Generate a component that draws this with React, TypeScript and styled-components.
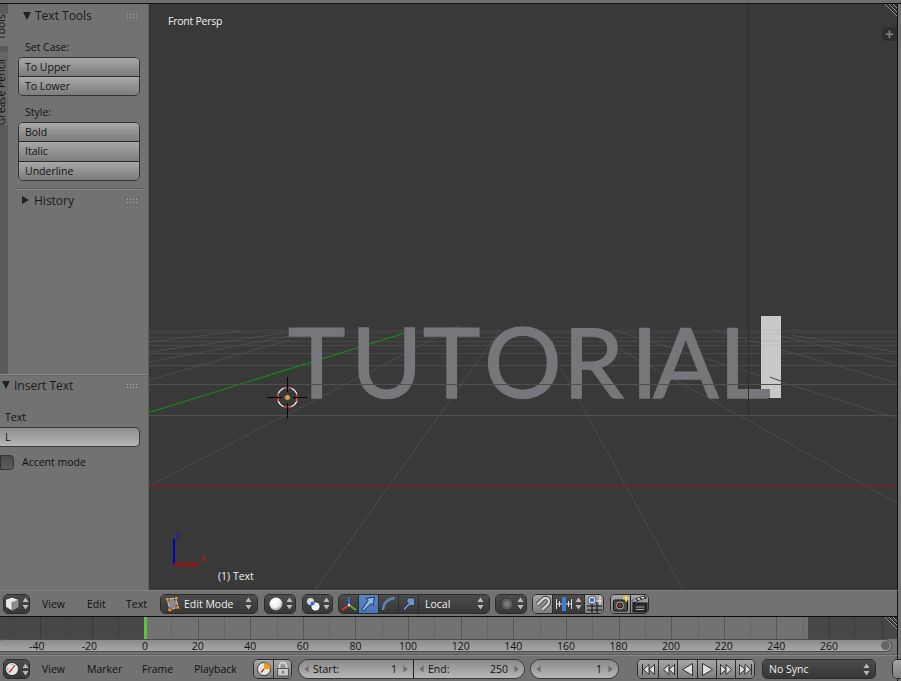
import React from "react";
import styled, { createGlobalStyle } from "styled-components";

const Global = createGlobalStyle`
  html, body { margin: 0; padding: 0; background: #727272; }
  * { box-sizing: border-box; }
`;

const Root = styled.div`
  width: 901px; height: 681px; overflow: hidden; position: relative;
  display: flex; flex-direction: column; background: #727272;
  font-family: "Open Sans", "Noto Sans", sans-serif; font-size: 10.5px; color: #111;
`;
const TopStrip = styled.div`
  height: 4px; flex: none; background: #6e6e6e; border-bottom: 1px solid #111;
`;
const Main = styled.div`display: flex; height: 586px; flex: none;`;
const Sidebar = styled.div`
  width: 149px; flex: none; display: flex; flex-direction: column;
  border-right: 1px solid #5e5e5e; background: #727272;
`;
const ToolShelf = styled.div`display: flex; height: 370px; flex: none;`;
const Tabs = styled.div`
  width: 8px; flex: none; background: #5a5a5a; overflow: hidden;
  display: flex; flex-direction: column; padding-top: 10px;
`;
const Tab = styled.div<{ $h: number; $pb: number; $active?: boolean }>`
  height: ${(p) => p.$h}px; width: 8px; flex: none; margin-bottom: 6px; padding-bottom: ${(p) => p.$pb}px;
  background: ${(p) => (p.$active ? "#727272" : "#666666")};
  overflow: hidden; display: flex; align-items: flex-end; justify-content: center;
`;
const TabText = styled.span`
  writing-mode: vertical-rl; transform: rotate(180deg); white-space: nowrap;
  line-height: 12px; margin-left: -7px; color: #111; font-size: 10.5px;
`;
const Shelf = styled.div`flex: 1; display: flex; flex-direction: column; min-width: 0;`;
const PanelHeader = styled.div<{ $left: number; $h?: number }>`
  height: ${(p) => p.$h ?? 24}px; flex: none; display: flex; align-items: center;
  padding-left: ${(p) => p.$left}px; font-size: 12px; color: #1a1a1a; position: relative;
`;
const Tri = styled.span<{ $open?: boolean }>`
  width: 0; height: 0; flex: none; margin-right: 5px;
  ${(p) =>
    p.$open
      ? "border-left:4px solid transparent;border-right:4px solid transparent;border-top:8px solid #222;margin-right:4px;"
      : "border-top:4px solid transparent;border-bottom:4px solid transparent;border-left:7px solid #222;"}
`;
const Grip = styled.span`
  width: 11px; height: 5px; margin-left: auto; margin-right: 11px; flex: none;
  background-image: radial-gradient(circle, #b8b8b8 0.6px, #5a5a5a 0.7px, transparent 1px);
  background-size: 3px 3px; opacity: 0.9;
`;
const Label = styled.div<{ $top: number; $left: number }>`
  height: 14px; line-height: 14px; flex: none;
  margin-top: ${(p) => p.$top}px; margin-left: ${(p) => p.$left}px; color: #111;
`;
const BtnGroup = styled.div`
  width: 122px; margin: 3px 0 0 10px; flex: none;
  border: 1px solid #333; border-radius: 5px; overflow: hidden;
`;
const Btn = styled.div<{ $h: number }>`
  height: ${(p) => p.$h}px; line-height: 18px; padding-left: 6px; color: #111;
  background: linear-gradient(#a8a8a8, #7c7c7c);
  & + & { border-top: 1px solid #2e2e2e; }
`;
const Separator = styled.div`
  height: 2px; width: 129px; margin: 7px 0 0 6px; flex: none;
  background: #5c5c5c; border-bottom: 1px solid #858585;
`;
const Operator = styled.div`
  height: 216px; flex: none; display: flex; flex-direction: column;
  border-top: 1px solid #8a8a8a; box-shadow: inset 0 1px 0 #666;
`;
const TextInput = styled.div`
  width: 141px; height: 20px; margin: 3px 0 0 -1px; flex: none; padding-left: 5px; line-height: 18px;
  border: 1px solid #3a3a3a; border-radius: 0 5px 5px 0; color: #111;
  background: linear-gradient(#8e8e8e, #b6b6b6);
`;
const CheckRow = styled.div`display: flex; align-items: center; height: 16px; margin-top: 7px; flex: none;`;
const Check = styled.span`
  width: 14px; height: 15px; flex: none; border: 1px solid #333; border-radius: 0 4px 4px 0;
  background: linear-gradient(#4a4a4a, #5c5c5c); margin-right: 8px;
`;

const Viewport = styled.div`flex: 1; position: relative; background: #393939; overflow: hidden;`;
const Canvas = styled.svg`position: absolute; inset: 0; display: block;`;
const Overlay = styled.div<{ $x: number; $y: number; $ls?: number }>`
  position: absolute; left: ${(p) => p.$x}px; top: ${(p) => p.$y}px; color: #f0f0f0; white-space: nowrap; line-height: 14px;
  letter-spacing: ${(p) => p.$ls ?? 0}px;
`;
const AddBtn = styled.div`
  position: absolute; right: 0; top: 23px; width: 15px; height: 14px; background: #2e2e2e;
  border-radius: 4px 0 0 4px; color: #808080; font: bold 15px/14px "Liberation Sans", sans-serif; text-align: center;
`;
const HatchBox = styled.svg<{ $top: number }>`
  position: absolute; right: 0; top: ${(p) => p.$top}px; display: block; z-index: 2;
`;
const RightStrip = styled.div`width: 4px; flex: none; border-left: 1px solid #111; background: #727272;`;

const Bar = styled.div<{ $h: number }>`
  height: ${(p) => p.$h}px; flex: none; display: flex; align-items: center; padding-left: 3px;
  background: #727272; position: relative; margin-right: 3px; border-right: 1px solid #111;
`;
const HeaderBar = styled(Bar)`border-top: 1px solid #808080; border-bottom: 1px solid #0c0c0c;`;
const FootBar = styled(Bar)`border-top: 1px solid #858585; padding-top: 1px;`;
const Group = styled.div<{ $ml?: number }>`
  display: flex; height: 20px; flex: none; margin-left: ${(p) => p.$ml ?? 0}px;
  border: 1px solid #2c2c2c; border-radius: 5px; overflow: hidden;
`;
const Cell = styled.div<{ $w: number; $tone?: "dark" | "light" | "blue" }>`
  width: ${(p) => p.$w}px; flex: none; display: flex; align-items: center; justify-content: center; gap: 2px;
  color: #eee; position: relative;
  background: ${(p) =>
    p.$tone === "light"
      ? "linear-gradient(#a6a6a6, #7e7e7e)"
      : p.$tone === "blue"
        ? "linear-gradient(#5986c8, #4a75b2)"
        : "linear-gradient(#4c4c4c, #373737)"};
  & + & { border-left: 1px solid #2c2c2c; }
`;
const SelectCell = styled(Cell)<{ $pad?: number }>`
  justify-content: flex-start; padding: 0 5px 0 ${(p) => p.$pad ?? 6}px; gap: 4px;
`;
const SelectText = styled.span`flex: 1; white-space: nowrap;`;
const Menu = styled.div<{ $w: number; $ml?: number }>`
  width: ${(p) => p.$w}px; margin-left: ${(p) => p.$ml ?? 0}px; flex: none; color: #111; line-height: 14px;
`;

const TimelineArea = styled.div`
  height: 38px; flex: none; display: flex; flex-direction: column; position: relative;
  border-right: 1px solid #111; margin-right: 3px;
`;
const Track = styled.div`height: 22px; flex: none; display: flex; position: relative; background: #727272;`;
const TrackGrid = styled.svg`position: absolute; inset: 0; display: block;`;
const Range = styled.div<{ $w: number }>`background: #474747; flex: 0 0 ${(p) => p.$w}px;`;
const Playhead = styled.div`width: 3px; flex: none; background: #5dc43c; position: relative; z-index: 1;`;
const FillRange = styled.div`flex: 1;`;
const ScrollRow = styled.div`height: 16px; flex: none; border-bottom: 1px solid #606060;`;
const Ruler = styled.div`
  height: 13px; width: 896px; margin-left: -4px; padding-left: 16.5px; display: flex; align-items: center; position: relative;
  border: 1px solid #4c4c4c; border-radius: 7px; background: linear-gradient(#8a8a8a, #a8a8a8);
`;
const Tick = styled.span<{ $neg?: boolean }>`
  width: 52.62px; flex: none; text-align: center; color: #111; line-height: 12px;
  padding-right: ${(p) => (p.$neg ? 6 : 0)}px;
`;
const ScrollDot = styled.span`
  position: absolute; right: 1px; top: 1px; width: 9px; height: 9px; border-radius: 50%; background: #666;
`;
const NumGroup = styled.div<{ $ml: number }>`
  display: flex; height: 20px; flex: none; margin-left: ${(p) => p.$ml}px;
  border: 1px solid #3a3a3a; border-radius: 10px; overflow: hidden;
`;
const NumField = styled.div<{ $w: number }>`
  width: ${(p) => p.$w}px; flex: none; display: flex; align-items: center; padding: 0 5px;
  background: linear-gradient(#8a8a8a, #b6b6b6); color: #111; gap: 6px;
  & + & { border-left: 1px solid #222; }
`;
const NumLabel = styled.span`flex: 1; white-space: nowrap; margin-left: -2px;`;

const UpDown = ({ c = "#bbb" }: { c?: string }) => (
  <svg width="7" height="13" viewBox="0 0 7 13" style={{ flex: "none" }}>
    <path d="M3.5 0.5 L6.5 5 H0.5Z M0.5 8 H6.5 L3.5 12.5Z" fill={c} />
  </svg>
);
const Ico = ({ s = 16, children }: { s?: number; children: React.ReactNode }) => (
  <svg width={s} height={s} viewBox={`0 0 ${s} ${s}`} style={{ flex: "none" }}>{children}</svg>
);
const Cube = () => (
  <Ico>
    <path d="M8 1 L14.5 3.5 V11 L8 15 L1.5 11 V3.5Z" fill="#e8e8e8" stroke="#222" strokeWidth=".8" />
    <path d="M8 6 L14.5 3.5 V11 L8 15Z" fill="#8e8e8e" />
    <path d="M8 6 V15" stroke="#555" strokeWidth=".6" />
  </Ico>
);
const Clock = () => (
  <Ico>
    <circle cx="8" cy="8" r="6.5" fill="#e6e6e6" stroke="#222" strokeWidth=".8" />
    <path d="M8 8 L11 4 M8 8 L5 11.5" stroke="#c22" strokeWidth="1.2" />
    <path d="M3 8 H4.5 M8 3 V4" stroke="#777" />
  </Ico>
);
const EditMode = () => (
  <Ico>
    <path d="M3 3 L12 2 L14 11 L6 14Z" fill="#8a8a8a" stroke="#ddd" strokeWidth=".8" />
    <g fill="#e8902a" stroke="#222" strokeWidth=".5">
      <rect x="1.5" y="1.5" width="3.5" height="3.5" />
      <rect x="10.5" y="0.5" width="3.5" height="3.5" />
      <rect x="12" y="9.5" width="3.5" height="3.5" />
      <rect x="4" y="12" width="3.5" height="3.5" />
    </g>
  </Ico>
);
const Sphere = () => (
  <Ico>
    <defs>
      <radialGradient id="sph" cx=".4" cy=".35" r=".7">
        <stop offset="0" stopColor="#fff" />
        <stop offset=".6" stopColor="#eee" />
        <stop offset="1" stopColor="#888" />
      </radialGradient>
    </defs>
    <circle cx="8" cy="8" r="6.5" fill="url(#sph)" />
  </Ico>
);
const Pivot = () => (
  <Ico>
    <circle cx="5.5" cy="5.5" r="4" fill="#ddd" stroke="#222" strokeWidth=".7" />
    <circle cx="10.5" cy="10.5" r="4.5" fill="#f2f2f2" stroke="#222" strokeWidth=".7" />
    <circle cx="7.5" cy="7.5" r="2" fill="#2f6fd6" />
  </Ico>
);
const Axes = () => (
  <Ico s={18}>
    <path d="M9 10 V2" stroke="#3a6fd8" strokeWidth="1.8" />
    <path d="M9 10 L16 15" stroke="#5fb030" strokeWidth="1.8" />
    <path d="M9 10 L2 15" stroke="#d63a2a" strokeWidth="1.8" />
    <circle cx="9" cy="10" r="1.2" fill="#ddd" />
  </Ico>
);
const ArrowBlue = () => (
  <Ico s={18}>
    <path d="M2 14.5 L3.5 16 L11 8.5 L13 10.5 L14.5 2 L6 3.5 L8 5.5Z" fill="#8cb6ec" stroke="#17233a" strokeWidth=".9" />
  </Ico>
);
const ArcBlue = () => (
  <Ico s={18}>
    <path d="M3 15 C3.5 8 7.5 4 14.5 3" fill="none" stroke="#5f85b8" strokeWidth="2.4" />
  </Ico>
);
const ScaleBlue = () => (
  <Ico s={18}>
    <path d="M3 14 L4.5 15.5 L9.5 10.5 H14.5 V3 H7 V8 H8.5Z" fill="#6f94c6" stroke="#1c2433" strokeWidth=".7" />
  </Ico>
);
const Prop = () => (
  <Ico>
    <circle cx="8" cy="8" r="6" fill="#5c5c5c" stroke="#333" strokeWidth=".7" />
    <circle cx="8" cy="8" r="3" fill="#7a7a7a" />
  </Ico>
);
const Magnet = () => (
  <Ico s={18}>
    <path d="M3.5 9.5 L9 4 a3.4 3.4 0 0 1 5 5 L8.5 14.5" fill="none" stroke="#2c2c2c" strokeWidth="4.2" />
    <path d="M3.5 9.5 L9 4 a3.4 3.4 0 0 1 5 5 L8.5 14.5" fill="none" stroke="#cfcfcf" strokeWidth="2.6" />
  </Ico>
);
const SnapType = () => (
  <Ico s={18}>
    <path d="M1.5 4 V14 M16.5 4 V14 M4.5 6 V12 M13.5 6 V12 M1.5 9 H16.5" stroke="#dcdcdc" strokeWidth="1" />
    <rect x="7" y="2" width="4" height="14" fill="#3d7fd8" />
  </Ico>
);
const SnapGrid = () => (
  <Ico s={18}>
    <path d="M2 11 H17 M2 15 H17 M7 7 V18 M12 7 V18" stroke="#111" strokeWidth="1.1" />
    <path d="M10 6 H17 M15 1 V10" stroke="#f0f0f0" strokeWidth="1" />
    <circle cx="7" cy="5" r="4" fill="#f0f0f0" stroke="#222" strokeWidth=".7" />
    <circle cx="7" cy="5" r="2.3" fill="#2f6fd6" />
  </Ico>
);
const Camera = () => (
  <Ico s={18}>
    <rect x="1.5" y="5" width="14" height="11" rx="1.5" fill="#4a4a4a" stroke="#111" />
    <circle cx="8" cy="10.5" r="3.5" fill="#222" stroke="#ccc" strokeWidth=".8" />
    <circle cx="8" cy="10.5" r="1.4" fill="#b33" />
    <path d="M14 0.5 V6.5 M11 3.5 H17" stroke="#f2d44a" strokeWidth="2" />
  </Ico>
);
const Clapper = () => (
  <Ico s={18}>
    <rect x="2" y="8" width="14" height="9" fill="#2d2d2d" stroke="#111" />
    <path d="M5 12 H13 M5 14.5 H13" stroke="#9aa8c0" strokeWidth="1" />
    <path d="M1.5 7.5 L15.5 2.5 L14.5 0.5 L1 5Z" fill="#e8e8e8" stroke="#111" strokeWidth=".7" />
    <path d="M5 3.6 L7 6.2 M9 2.4 L11 5 M13 1.2 L15 3.8" stroke="#222" strokeWidth="1.2" />
    <rect x="2" y="3" width="2" height="3" fill="#6a93d0" />
  </Ico>
);
const KeyClock = () => (
  <Ico>
    <circle cx="8" cy="8" r="6.5" fill="#e6e6e6" stroke="#222" strokeWidth=".8" />
    <path d="M8 8 V1.5 A6.5 6.5 0 0 1 14.5 8Z" fill="#f09a1c" />
    <path d="M8 8 L5 11.5" stroke="#c22" strokeWidth="1.2" />
  </Ico>
);
const Lock = () => (
  <Ico>
    <path d="M4.5 7.5 V5 a3.5 3.5 0 0 1 7 0 V7.5" fill="none" stroke="#dcdcdc" strokeWidth="1.6" />
    <rect x="2.5" y="7.5" width="11" height="7.5" fill="#c8c8c8" stroke="#333" strokeWidth=".7" />
    <path d="M8 10 V12.5" stroke="#555" strokeWidth="1.4" />
  </Ico>
);
const Tp = ({ d }: { d: string }) => (
  <svg width="15" height="15" viewBox="0 0 15 15" style={{ flex: "none" }}>
    <path d={d} fill="#dedede" stroke="#222" strokeWidth=".9" strokeLinejoin="round" />
  </svg>
);

const Hatch = ({ top }: { top: number }) => (
  <HatchBox $top={top} width="13" height="13" viewBox="0 0 13 13">
    <path d="M1 0 L13 12 M5 0 L13 8 M9 0 L13 4" stroke="#9a9a9a" strokeWidth="1" />
    <path d="M2 0 L13 11 M6 0 L13 7 M10 0 L13 3" stroke="#1c1c1c" strokeWidth="1" />
  </HatchBox>
);

const Arrow = ({ dir }: { dir: "l" | "r" }) => (
  <svg width="5" height="8" viewBox="0 0 5 8" style={{ flex: "none" }}>
    <path d={dir === "l" ? "M4.5 0.5 V7.5 L0.5 4Z" : "M0.5 0.5 V7.5 L4.5 4Z"} fill="#6c6c6c" />
  </svg>
);

const floorH: [number, string][] = [
  [330, "#454545"], [332, "#454545"], [337, "#454545"], [341, "#484848"], [345, "#484848"],
  [353, "#4a4a4a"], [365, "#4c4c4c"], [384, "#505050"], [415, "#505050"],
];
const shallow: [number, number, number, number][] = [
  [149, 380, 290, 340],
  [149, 362, 300, 334],
  [149, 352, 285, 333],
  [149, 342, 240, 331],
  [613, 330, 897, 418],
  [713, 330, 897, 383],
  [763, 332, 897, 363],
  [790, 335, 897, 352],
];
const diag: [number, number, number, number][] = [
  [149, 486, 460, 325],
  [315, 590, 500, 330],
  [683, 590, 561, 368],
  [590, 333, 897, 503],
];
const ticks = [-40, -20, 0, 20, 40, 60, 80, 100, 120, 140, 160, 180, 200, 220, 240, 260];
const gridLines = Array.from({ length: 35 }, (_, i) => i - 5);

export default function App() {
  return (
    <Root>
      <Global />
      <TopStrip />
      <Main>
        <Sidebar>
          <ToolShelf>
            <Tabs>
              <Tab $h={32} $pb={6} $active><TabText>Tools</TabText></Tab>
              <Tab $h={73} $pb={0}><TabText>Grease Pencil</TabText></Tab>
            </Tabs>
            <Shelf>
              <PanelHeader $left={15} $h={23}><Tri $open />Text Tools<Grip /></PanelHeader>
              <Label $top={13} $left={17}>Set Case:</Label>
              <BtnGroup>
                <Btn $h={18}>To Upper</Btn>
                <Btn $h={19}>To Lower</Btn>
              </BtnGroup>
              <Label $top={9} $left={17}>Style:</Label>
              <BtnGroup>
                <Btn $h={18}>Bold</Btn>
                <Btn $h={20}>Italic</Btn>
                <Btn $h={19}>Underline</Btn>
              </BtnGroup>
              <Separator />
              <PanelHeader $left={14} $h={20}><Tri />History<Grip /></PanelHeader>
            </Shelf>
          </ToolShelf>
          <Operator>
            <PanelHeader $left={2} $h={20}><Tri $open />Insert Text<Grip /></PanelHeader>
            <Label $top={15} $left={5}>Text</Label>
            <TextInput>L</TextInput>
            <CheckRow><Check />Accent mode</CheckRow>
          </Operator>
        </Sidebar>
        <Viewport>
          <Canvas width="748" height="586" viewBox="149 4 748 586">
            {floorH.map(([y, c]) => (
              <line key={y} x1="149" x2="897" y1={y + 0.5} y2={y + 0.5} stroke={c} strokeWidth="1" />
            ))}
            {shallow.map(([a, b, c, d], i) => (
              <line key={i} x1={a} y1={b} x2={c} y2={d} stroke="#505050" strokeWidth=".8" />
            ))}
            {diag.map(([a, b, c, d], i) => (
              <line key={i} x1={a} y1={b} x2={c} y2={d} stroke="#525252" strokeWidth=".8" />
            ))}
            <line x1="149" y1="412.5" x2="405" y2="333" stroke="#149014" strokeWidth="1.1" />
            <line x1="149" y1="484.5" x2="897" y2="484.5" stroke="#901818" strokeWidth="1" />
            <text
              x="288 351 423 484 563 631 653 719"
              y="398"
              fontFamily="Lato, sans-serif"
              fontSize="97"
              fill="#77777b"
              stroke="#77777b"
              strokeWidth="1.4"
            >
              TUTORIAL
            </text>
            <rect x="761" y="316" width="20" height="82" fill="#c9c9c9" />
            <path d="M761 330 H781 M761 334 H781 M761 341 H781 M761 345 H781" stroke="#bcbcbc" strokeWidth="1" />
            <rect x="728" y="389" width="42" height="9" fill="#77777b" />
            <line x1="149" x2="897" y1="384.5" y2="384.5" stroke="#505050" strokeWidth="1" />
            <path d="M770 377 L775 379 L781 381" stroke="#444" fill="none" strokeWidth="1" />
            <line x1="748.5" y1="4" x2="748.5" y2="416" stroke="#2e2e2e" strokeWidth="1" />
            <g>
              <circle cx="287.5" cy="397.5" r="10" fill="none" stroke="#fff" strokeWidth="1.2" />
              <circle cx="287.5" cy="397.5" r="10" fill="none" stroke="#d01010" strokeWidth="1.2" strokeDasharray="8 7.7" strokeDashoffset="4" />
              <path d="M267 397.5 H282 M293 397.5 H307 M287.5 377 V392 M287.5 403 V418" stroke="#000" strokeWidth="1" />
              <circle cx="287.5" cy="397.5" r="3" fill="#d39a4e" stroke="#222" strokeWidth=".6" />
            </g>
            <path d="M174 539 V564" stroke="#0000c8" strokeWidth="2" />
            <path d="M174 564 H199" stroke="#c80000" strokeWidth="2" />
            <text x="175" y="538" fontFamily="Open Sans, sans-serif" fontSize="10" fill="#1414c8">z</text>
            <text x="201" y="562" fontFamily="Open Sans, sans-serif" fontSize="10" fill="#c81414">x</text>
          </Canvas>
          <Overlay $x={19} $y={10} $ls={-0.25}>Front Persp</Overlay>
          <Overlay $x={69} $y={565}>(1) Text</Overlay>
          <AddBtn>+</AddBtn>
          <Hatch top={0} />
        </Viewport>
        <RightStrip />
      </Main>
      <HeaderBar $h={27}>
        <Group>
          <Cell $w={25}><Cube /><UpDown /></Cell>
        </Group>
        <Menu $w={45} $ml={12}>View</Menu>
        <Menu $w={39}>Edit</Menu>
        <Menu $w={34}>Text</Menu>
        <Group>
          <SelectCell $w={96} $pad={3}><EditMode /><SelectText>Edit Mode</SelectText><UpDown /></SelectCell>
        </Group>
        <Group $ml={6}>
          <Cell $w={30}><Sphere /><UpDown /></Cell>
        </Group>
        <Group $ml={6}>
          <Cell $w={29}><Pivot /><UpDown /></Cell>
        </Group>
        <Group $ml={5}>
          <Cell $w={19}><Axes /></Cell>
          <Cell $w={20} $tone="blue"><ArrowBlue /></Cell>
          <Cell $w={20}><ArcBlue /></Cell>
          <Cell $w={20}><ScaleBlue /></Cell>
          <SelectCell $w={71}><SelectText>Local</SelectText><UpDown /></SelectCell>
        </Group>
        <Group $ml={5}>
          <Cell $w={30}><Prop /><UpDown /></Cell>
        </Group>
        <Group $ml={5}>
          <Cell $w={19} $tone="light"><Magnet /></Cell>
          <Cell $w={32}><SnapType /><UpDown /></Cell>
          <Cell $w={19} $tone="light"><SnapGrid /></Cell>
        </Group>
        <Group $ml={6}>
          <Cell $w={19} $tone="light"><Camera /></Cell>
          <Cell $w={18} $tone="light"><Clapper /></Cell>
        </Group>
      </HeaderBar>
      <TimelineArea>
        <Track>
          <Range $w={144} />
          <Playhead />
          <FillRange />
          <Range $w={89} />
          <TrackGrid width="897" height="22" viewBox="0 0 897 22">
            {gridLines.map((k) => {
              const x = Math.round(145 + k * 26.31) + 0.5;
              return x === 145.5 ? null : (
                <line key={k} x1={x} x2={x} y1="0" y2="22" stroke="#222" strokeOpacity={k % 2 === 0 ? 0.35 : 0.14} strokeWidth="1" />
              );
            })}
          </TrackGrid>
        </Track>
        <ScrollRow>
          <Ruler>
            {ticks.map((t) => <Tick key={t} $neg={t < 0}>{t}</Tick>)}
            <ScrollDot />
          </Ruler>
        </ScrollRow>
        <Hatch top={0} />
      </TimelineArea>
      <FootBar $h={26}>
        <Group>
          <Cell $w={25}><Clock /><UpDown /></Cell>
        </Group>
        <Menu $w={45} $ml={12}>View</Menu>
        <Menu $w={55}>Marker</Menu>
        <Menu $w={52}>Frame</Menu>
        <Menu $w={59}>Playback</Menu>
        <Group>
          <Cell $w={19} $tone="light"><KeyClock /></Cell>
          <Cell $w={18} $tone="light"><Lock /></Cell>
        </Group>
        <NumGroup $ml={6}>
          <NumField $w={114}><Arrow dir="l" /><NumLabel>Start:</NumLabel>1<Arrow dir="r" /></NumField>
          <NumField $w={111}><Arrow dir="l" /><NumLabel>End:</NumLabel>250<Arrow dir="r" /></NumField>
        </NumGroup>
        <NumGroup $ml={5}>
          <NumField $w={87}><Arrow dir="l" /><NumLabel />1<Arrow dir="r" /></NumField>
        </NumGroup>
        <Group $ml={18}>
          <Cell $w={20} $tone="light"><Tp d="M1.5 2 V13 M13.5 2.5 L8 7.5 L13.5 12.5Z M8 2.5 L2.5 7.5 L8 12.5Z" /></Cell>
          <Cell $w={19} $tone="light"><Tp d="M13.5 2.5 L8 7.5 L13.5 12.5Z M8 2.5 L2.5 7.5 L8 12.5Z" /></Cell>
          <Cell $w={20} $tone="light"><Tp d="M12.5 1.5 L2.5 7.5 L12.5 13.5Z" /></Cell>
          <Cell $w={19} $tone="light"><Tp d="M2.5 1.5 L12.5 7.5 L2.5 13.5Z" /></Cell>
          <Cell $w={19} $tone="light"><Tp d="M1.5 2.5 L7 7.5 L1.5 12.5Z M7 2.5 L12.5 7.5 L7 12.5Z" /></Cell>
          <Cell $w={19} $tone="light"><Tp d="M13.5 2 V13 M1.5 2.5 L7 7.5 L1.5 12.5Z M7 2.5 L12.5 7.5 L7 12.5Z" /></Cell>
        </Group>
        <Group $ml={7}>
          <SelectCell $w={112}><SelectText>No Sync</SelectText><UpDown /></SelectCell>
        </Group>
        <Group $ml={16}>
          <Cell $w={12} $tone="light" />
        </Group>
      </FootBar>
    </Root>
  );
}
